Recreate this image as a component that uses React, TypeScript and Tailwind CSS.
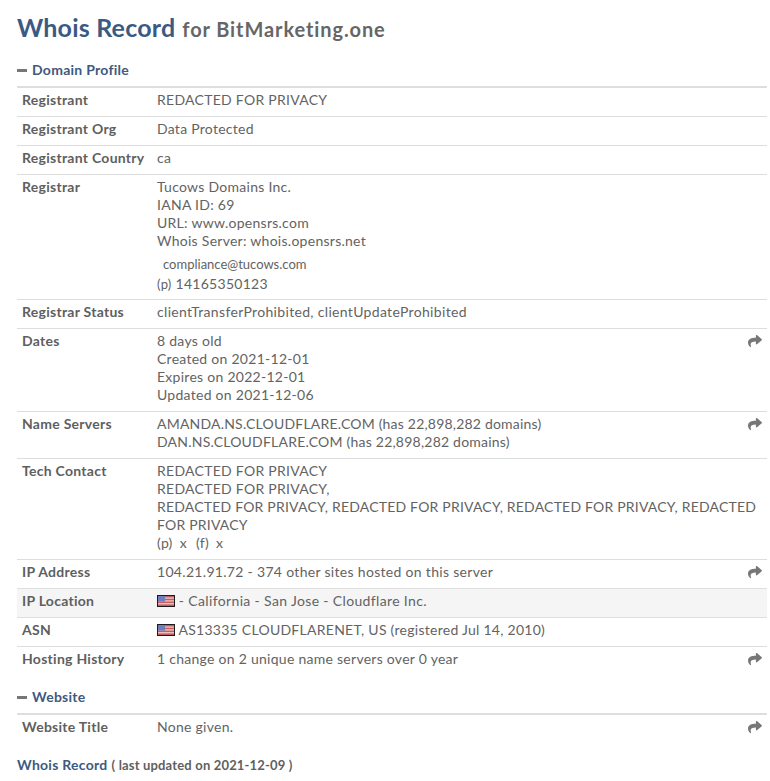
import React from 'react';
import { FaShare } from 'react-icons/fa';

const Flag = () => (
  <svg width="18" height="12" viewBox="0 0 18 12" className="inline-block align-[-1px]">
    <rect width="18" height="12" fill="#1c1c1c" />
    <rect x="1" y="1" width="16" height="10" fill="#eac0c0" />
    <rect x="1" y="1" width="16" height="1.4" fill="#c65b62" />
    <rect x="1" y="3.8" width="16" height="1.4" fill="#c65b62" />
    <rect x="1" y="6.6" width="16" height="1.4" fill="#c65b62" />
    <rect x="1" y="9.4" width="16" height="1.6" fill="#c65b62" />
    <rect x="1" y="1" width="7" height="5.5" fill="#6f7cc0" />
  </svg>
);

type RowProps = {
  label: string;
  children: React.ReactNode;
  arrow?: boolean;
  shaded?: boolean;
  last?: boolean;
};

const Row = ({ label, children, arrow, shaded, last }: RowProps) => (
  <div className={`relative flex px-[5px] pt-[3px] pb-[7px] ${last ? '' : 'border-b border-[#dedede]'} ${shaded ? 'bg-[#f5f5f5]' : ''}`}>
    <div className="w-[135px] shrink-0 font-bold text-[#5f5f5f]">{label}</div>
    <div className="flex-1 text-[#636363]">{children}</div>
    {arrow && <FaShare size={14} className="absolute right-[5px] top-[5px] text-[#777]" />}
  </div>
);

const Section = ({ title }: { title: string }) => (
  <div className="flex items-center h-[18px]">
    <span className="w-[10px] h-[3px] bg-[#777] mr-[5px]" />
    <span className="font-bold text-[14px] text-[#3d5a80]">{title}</span>
  </div>
);

export default function App() {
  return (
    <div className="w-[770px] h-[781px] bg-white px-[17px] pr-[3px] text-[14px] leading-[18px] tracking-[0.27px] overflow-hidden font-['Lato',sans-serif]">
      <h1 className="pt-[11px] pb-[2px] leading-[32px] h-[45px] font-bold text-[#666] text-[20px] tracking-[0.9px]">
        <span className="text-[25px] text-[#3a5a85] tracking-[0.2px]">Whois Record</span>
        <span className="ml-[7px]">for BitMarketing.one</span>
      </h1>
      <div className="pt-[16px]">
        <Section title="Domain Profile" />
      </div>
      <div className="mt-[7px] border-t-2 border-[#dedede]">
        <Row label="Registrant">REDACTED FOR PRIVACY</Row>
        <Row label="Registrant Org">Data Protected</Row>
        <Row label="Registrant Country">ca</Row>
        <Row label="Registrar">
          <div>Tucows Domains Inc.</div>
          <div>IANA ID: 69</div>
          <div>URL: www.opensrs.com</div>
          <div>Whois Server: whois.opensrs.net</div>
          <div className="mt-[4px] pl-[6px] text-[13px] tracking-normal h-[20px] leading-[20px]">compliance@tucows.com</div>
          <div className="mt-[1px] -mb-[1px]"><span className="text-[13px] mr-[4px]">(p)</span>14165350123</div>
        </Row>
        <Row label="Registrar Status"><span className="tracking-[0.33px]">clientTransferProhibited, clientUpdateProhibited</span></Row>
        <Row label="Dates" arrow>
          <div>8 days old</div>
          <div>Created on 2021-12-01</div>
          <div>Expires on 2022-12-01</div>
          <div>Updated on 2021-12-06</div>
        </Row>
        <Row label="Name Servers" arrow>
          <div className="tracking-[0.2px]">AMANDA.NS.CLOUDFLARE.COM (has 22,898,282 domains)</div>
          <div className="tracking-[0.22px]">DAN.NS.CLOUDFLARE.COM (has 22,898,282 domains)</div>
        </Row>
        <Row label="Tech Contact">
          <div>REDACTED FOR PRIVACY</div>
          <div>REDACTED FOR PRIVACY,</div>
          <div className="tracking-[0.2px]">REDACTED FOR PRIVACY, REDACTED FOR PRIVACY, REDACTED FOR PRIVACY, REDACTED FOR PRIVACY</div>
          <div><span className="mr-[7px]">(p)</span><span className="mr-[9px]">x</span><span className="mr-[7px]">(f)</span>x</div>
        </Row>
        <Row label="IP Address" arrow><span className="tracking-[0.31px]">104.21.91.72 - 374 other sites hosted on this server</span></Row>
        <Row label="IP Location" shaded><Flag /> <span className="tracking-[0.35px]">- California - San Jose - Cloudflare Inc.</span></Row>
        <Row label="ASN"><Flag /> AS13335 CLOUDFLARENET, US (registered Jul 14, 2010)</Row>
        <Row label="Hosting History" arrow last>1 change on 2 unique name servers over 0 year</Row>
      </div>
      <div className="pt-[13px]">
        <Section title="Website" />
      </div>
      <div className="mt-[7px] border-t-2 border-[#dedede]">
        <Row label="Website Title" arrow last>None given.</Row>
      </div>
      <div className="mt-[13px] font-bold">
        <span className="text-[#3d5a80]">Whois Record</span>
        <span className="ml-[4px] text-[#5f5f5f] text-[13px] tracking-[0.17px]">( last updated on 2021-12-09 )</span>
      </div>
    </div>
  );
}
